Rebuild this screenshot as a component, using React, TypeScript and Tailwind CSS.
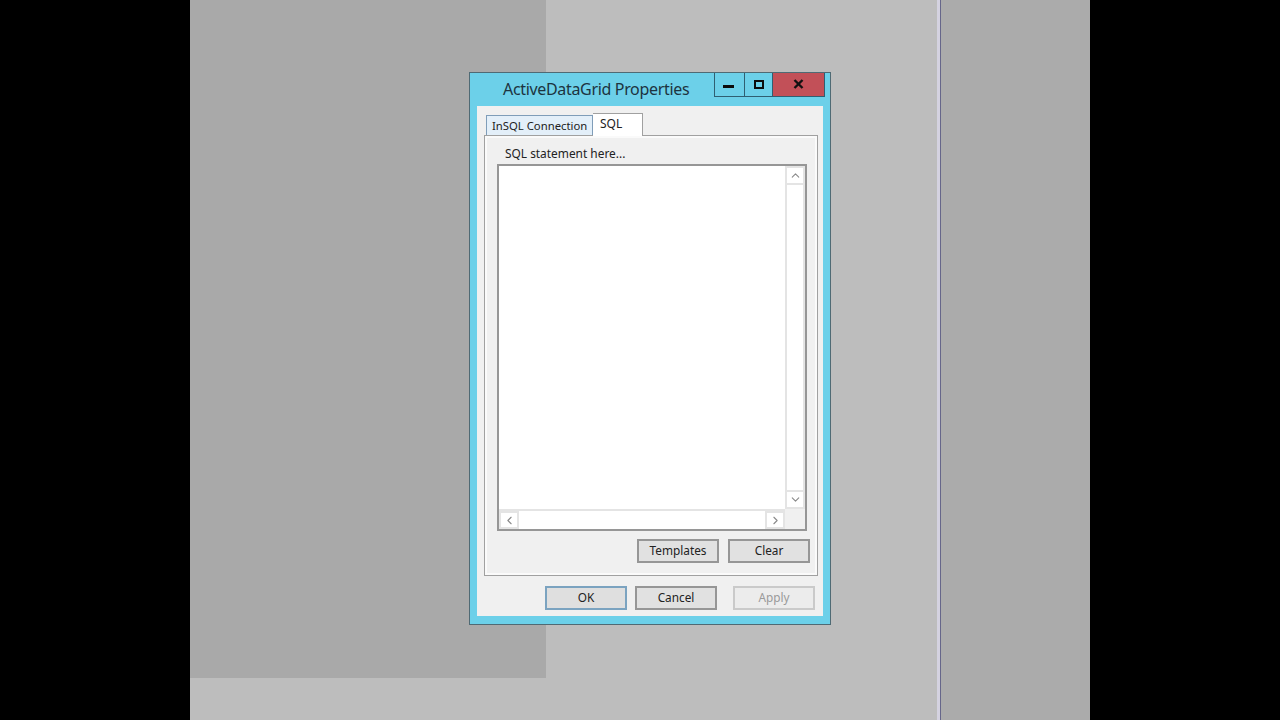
import { ChevronUp, ChevronDown, ChevronLeft, ChevronRight } from 'lucide-react'

function DlgButton({ label, className }: { label: string; className: string }) {
  return (
    <button type="button" className={`w-[82px] border-2 text-[11.8px] leading-none ${className}`}>
      {label}
    </button>
  )
}

function ScrollBtn({ children, className }: { children: React.ReactNode; className: string }) {
  return (
    <div className={`flex shrink-0 items-center justify-center border-2 border-[#e4e4e4] bg-white text-[#8a8a8a] ${className}`}>
      {children}
    </div>
  )
}

export default function App() {
  return (
    <div className="relative flex h-[720px] w-[1280px] overflow-hidden bg-black font-['Noto_Sans','Open_Sans',sans-serif] text-[#222]">
      <div className="ml-[190px] flex h-full w-[900px] bg-[#bdbdbd]">
        {/* windows behind the dialog */}
        <div className="h-[678px] w-[356px] bg-[#a9a9a9]" />
        <div className="ml-[391px] h-full w-[3px] bg-[#d4d2e0]" />
        <div className="h-full w-[1px] bg-[#66668a]" />
        <div className="h-full flex-1 bg-[#ababab]" />
      </div>

      {/* dialog */}
      <div className="absolute left-[469px] top-[72px] flex h-[553px] w-[362px] flex-col border border-[#4f6a74] bg-[#6cd0e9]">
        <div className="relative flex h-[33px] shrink-0 items-start">
          <span className="ml-[33px] mt-[4px] whitespace-nowrap text-[16px] leading-6 tracking-[-0.33px] text-[#1d3440]">ActiveDataGrid Properties</span>
          <div className="absolute right-[5px] top-0 flex h-[24px] border-x border-b border-[#2f5f72]">
            <div className="flex w-[30px] items-center justify-center border-r border-[#2f5f72]">
              <div className="mr-[2px] mt-[3px] h-[3px] w-[11px] bg-[#0c0c0c]" />
            </div>
            <div className="flex w-[27px] items-center justify-center">
              <div className="mb-[1px] ml-[1px] h-[9px] w-[10px] border-2 border-[#0c0c0c]" />
            </div>
            <div className="flex w-[52px] items-center justify-center border-l border-[#2f5f72] bg-[#c25058] text-[#111]">
              <svg width="11" height="10" viewBox="0 0 11 10" className="mb-[1px]">
                <path d="M1.5 1 L9.5 9 M9.5 1 L1.5 9" stroke="currentColor" strokeWidth="2.4" fill="none" />
              </svg>
            </div>
          </div>
        </div>

        <div className="mx-[7px] flex h-[510px] flex-col bg-[#f0f0f0] pl-[7px] pr-[5px] pt-[7px]">
          {/* tabs */}
          <div className="relative z-10 flex h-[22px] items-end pl-[2px]">
            <div className="flex h-[20px] w-[107px] items-center whitespace-nowrap border border-b-0 border-[#7f9db9] bg-[#e3eff9] pl-[5px] pt-[2px] text-[11.3px]">
              InSQL Connection
            </div>
            <div className="mb-[-1px] h-[23px] w-[50px] border border-b-0 border-l-0 border-[#a0a0a0] bg-white pl-[7px] pt-[1px] text-[12px]">
              SQL
            </div>
          </div>

          {/* tab page */}
          <div className="flex h-[441px] flex-col border border-[#a0a0a0] bg-[#f0f0f0] shadow-[inset_0_0_0_2px_#fafafa]">
            <div className="ml-[20px] mt-[9px] h-[19px] text-[11.9px] leading-[16px]">SQL statement here...</div>
            <div className="ml-[12px] flex h-[367px] w-[310px] border-2 border-[#969696] bg-white">
              <div className="flex flex-1 flex-col">
                <div className="flex-1" />
                <div className="flex h-[20px] border-t-2 border-[#e4e4e4]">
                  <ScrollBtn className="w-[20px]">
                    <ChevronLeft size={13} />
                  </ScrollBtn>
                  <div className="flex-1" />
                  <ScrollBtn className="w-[20px]">
                    <ChevronRight size={13} />
                  </ScrollBtn>
                </div>
              </div>
              <div className="flex w-[20px] flex-col bg-[#f0f0f0]">
                <div className="flex flex-1 flex-col border-x-2 border-[#e4e4e4] bg-white">
                  <ScrollBtn className="-mx-[2px] h-[19px]">
                    <ChevronUp size={13} />
                  </ScrollBtn>
                  <div className="flex-1" />
                  <ScrollBtn className="-mx-[2px] h-[19px]">
                    <ChevronDown size={13} />
                  </ScrollBtn>
                </div>
                <div className="h-[20px] bg-[#f0f0f0]" />
              </div>
            </div>
            <div className="mt-[8px] flex h-[24px] justify-end gap-[9px] pr-[7px]">
              <DlgButton label="Templates" className="border-[#969696] bg-[#e1e1e1]" />
              <DlgButton label="Clear" className="border-[#969696] bg-[#e1e1e1]" />
            </div>
          </div>

          {/* dialog buttons */}
          <div className="mt-[10px] flex h-[24px] pl-[61px]">
            <DlgButton label="OK" className="border-[#7ba3c0] bg-[#dfdfdf]" />
            <DlgButton label="Cancel" className="ml-[8px] border-[#969696] bg-[#e1e1e1]" />
            <DlgButton label="Apply" className="ml-[16px] border-[#cacaca] bg-[#ececec] text-[#9a9a9a]" />
          </div>
        </div>
      </div>
    </div>
  )
}
